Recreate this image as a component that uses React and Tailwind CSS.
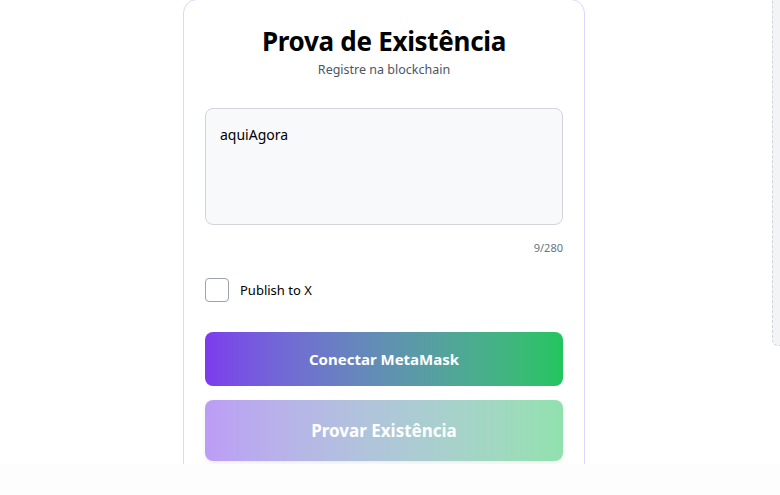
import React, { useState } from "react";

export default function App() {
  const [text, setText] = useState("aquiAgora");
  const [publish, setPublish] = useState(false);

  return (
    <div className="relative h-[495px] w-[780px] overflow-hidden bg-[#fdfdfd] font-['Noto_Sans',sans-serif] text-black">
      <div className="flex h-[464px] items-start justify-center overflow-hidden bg-white">
        <div className="ml-[-12px] w-[402px] shrink-0 rounded-[14px] border border-[#ddd6fe] bg-white px-[21px] pt-[24px] pb-16 -mt-px">
          <h1 className="text-center text-[26px] font-bold leading-[34px] tracking-[-0.3px]">Prova de Existência</h1>
          <p className="mt-[3px] text-center text-[12.5px] text-[#4b5563]">Registre na blockchain</p>

          <textarea
            value={text}
            onChange={(e) => setText(e.target.value)}
            className="mt-[28px] block h-[117px] w-full resize-none rounded-[8px] border border-[#d4d4dc] bg-[#f8f9fb] px-[14px] py-[16px] text-[14px] leading-5 outline-none"
          />
          <div className="mt-[15px] text-right text-[11px] text-[#6b7280]">{text.length}/280</div>

          <label className="mt-[22px] flex items-center gap-[11px]">
            <input
              type="checkbox"
              checked={publish}
              onChange={(e) => setPublish(e.target.checked)}
              className="h-[24px] w-[24px] appearance-none rounded-[4px] border border-[#9ca3af] bg-white"
            />
            <span className="text-[13px]">Publish to X</span>
          </label>

          <button
            type="button"
            className="mt-[30px] flex h-[54px] w-full items-center justify-center rounded-[8px] bg-gradient-to-r from-[#7c3aed] to-[#22c55e] text-[15px] font-bold text-white"
          >
            Conectar MetaMask
          </button>
          <button
            type="button"
            disabled
            className="mt-[14px] flex h-[61px] w-full items-center justify-center rounded-[8px] bg-gradient-to-r from-[#7c3aed] to-[#22c55e] text-[17px] font-bold text-white opacity-50 shadow-md"
          >
            Provar Existência
          </button>
        </div>
      </div>

      <div className="absolute right-[-20px] top-[-4px] h-[350px] w-[28px] rounded-[6px] border border-dashed border-[#d1d5db] bg-[#f3f4f6]" />
    </div>
  );
}
